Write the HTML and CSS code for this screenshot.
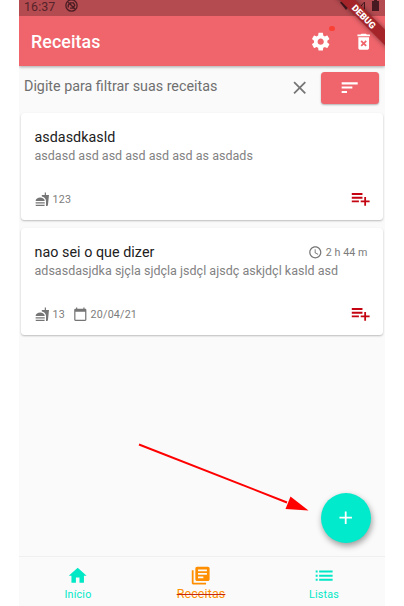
FILE: index.html
```html
<!DOCTYPE html>
<html lang="pt-BR">
<head>
<meta charset="utf-8">
<title>Receitas</title>
<link rel="stylesheet" href="styles.css">
</head>
<body>
<div class="screen">
  <header class="top">
    <div class="status">
      <span class="clock">16:37</span>
      <svg class="sync" viewBox="0 0 12 12"><circle cx="6" cy="6" r="5.2" fill="none" stroke="currentColor" stroke-width="1.2"/><path d="M3 7.8V5.5L5 3.6h2.8L9 5.8 7.4 8.4H4.6M3 3l6.2 6.2" fill="none" stroke="currentColor" stroke-width="1.3"/></svg>
      <svg class="signals" viewBox="0 0 42 14"><path d="M0 2.500Q6-2 12 2.500L6 10z" fill="currentColor"/><path d="M17.500 10.200L24.500 2v8.200z" fill="none" stroke="currentColor"/><path d="M32 1h2V0h3v1h2v10h-7z" fill="currentColor"/></svg>
    </div>
    <div class="appbar">
      <h1 class="title">Receitas</h1>
      <span class="settings"><svg class="icon" viewBox="0 0 24 24"><path d="M19.430 12.980c.04-.32.07-.64.07-.98s-.03-.66-.07-.98l2.110-1.650c.19-.15.24-.42.12-.64l-2-3.460c-.12-.22-.39-.3-.61-.22l-2.490 1c-.52-.4-1.080-.73-1.690-.98l-.38-2.650C14.460 2.180 14.250 2 14 2h-4c-.25 0-.46.18-.49.42l-.38 2.650c-.61.25-1.170.59-1.690.98l-2.490-1c-.23-.09-.49 0-.61.22l-2 3.460c-.13.22-.07.49.12.64l2.110 1.650c-.04.32-.07.65-.07.98s.03.66.07.98l-2.110 1.650c-.19.15-.24.42-.12.64l2 3.460c.12.22.39.3.61.22l2.490-1c.52.4 1.080.73 1.690.98l.38 2.650c.03.24.24.42.49.42h4c.25 0 .46-.18.49-.42l.38-2.650c.61-.25 1.170-.59 1.690-.98l2.490 1c.23.09.49 0 .61-.22l2-3.460c.12-.22.07-.49-.12-.64l-2.110-1.650zM12 15.500c-1.930 0-3.500-1.570-3.500-3.500s1.570-3.500 3.500-3.500 3.500 1.570 3.500 3.500-1.570 3.500-3.500 3.500z"/></svg><i class="dot"></i></span>
      <svg class="icon" viewBox="0 0 24 24"><path d="M6 19c0 1.100.9 2 2 2h8c1.100 0 2-.9 2-2V7H6v12zm2.460-7.120l1.410-1.410L12 12.590l2.120-2.120 1.410 1.410L13.410 14l2.120 2.120-1.410 1.410L12 15.410l-2.120 2.120-1.410-1.410L10.590 14l-2.130-2.120zM15.500 4l-1-1h-5l-1 1H5v2h14V4z"/></svg>
    </div>
    <div class="ribbon">DEBUG</div>
  </header>
  <div class="filter">
    <span class="hint">Digite para filtrar suas receitas</span>
    <svg class="icon clear" viewBox="0 0 24 24"><path d="M19 6.410L17.590 5 12 10.590 6.410 5 5 6.410 10.590 12 5 17.590 6.410 19 12 13.410 17.590 19 19 17.590 13.410 12z"/></svg>
    <button class="sort"><svg class="icon" viewBox="0 0 24 24"><path d="M3 18h6v-2.300H3v2.300zM3 6v2.300h18V6H3zm0 7h12v-2.300H3v2.300z"/></svg></button>
  </div>
  <main class="list">
    <article class="card">
      <div class="head"><h2 class="name">asdasdkasld</h2></div>
      <p class="desc">asdasd asd asd asd asd asd as asdads</p>
      <div class="foot">
        <svg class="small" viewBox="0 0 24 24"><path d="M18.060 22.990h1.660c.84 0 1.530-.64 1.630-1.460L23 5.050h-5V1h-1.970v4.050h-4.970l.3 2.340c1.710.47 3.310 1.320 4.270 2.260 1.440 1.420 2.430 2.890 2.430 5.290v8.050zM1 21.990V21h15.030v.99c0 .55-.45 1-1.010 1H2.010c-.56 0-1.010-.45-1.010-1zm15.030-7c0-8-15.030-8-15.030 0h15.030zM1.020 17h15v2h-15z"/></svg>
        <span class="meta">123</span>
        <svg class="icon add" viewBox="0 0 24 24"><path d="M14 9.800H2v2.200h12v-2.200zm0-4.100H2v2.200h12V5.700zm4 8.300v-4h-2v4h-4v2h4v4h2v-4h4v-2h-4zM2 16.100h8v-2.200H2v2.200z"/></svg>
      </div>
    </article>
    <article class="card">
      <div class="head"><h2 class="name">nao sei o que dizer</h2>
        <svg class="small" viewBox="0 0 24 24"><path d="M11.990 2C6.470 2 2 6.480 2 12s4.470 10 9.990 10C17.520 22 22 17.520 22 12S17.520 2 11.990 2zM12 20c-4.420 0-8-3.580-8-8s3.580-8 8-8 8 3.580 8 8-3.580 8-8 8zm.5-13H11v6l5.250 3.150.75-1.230-4.500-2.670z"/></svg>
        <span class="meta time">2 h 44 m</span></div>
      <p class="desc">adsasdasjdka sjçla sjdçla jsdçl ajsdç askjdçl kasld asd</p>
      <div class="foot">
        <svg class="small" viewBox="0 0 24 24"><path d="M18.060 22.990h1.660c.84 0 1.530-.64 1.630-1.460L23 5.050h-5V1h-1.970v4.050h-4.970l.3 2.340c1.710.47 3.310 1.320 4.270 2.260 1.440 1.420 2.430 2.890 2.430 5.290v8.050zM1 21.990V21h15.030v.99c0 .55-.45 1-1.010 1H2.010c-.56 0-1.010-.45-1.010-1zm15.030-7c0-8-15.030-8-15.030 0h15.030zM1.020 17h15v2h-15z"/></svg>
        <span class="meta">13</span>
        <svg class="small date" viewBox="0 0 24 24"><path d="M20 3h-1V1h-2v2H7V1H5v2H4c-1.100 0-2 .9-2 2v16c0 1.100.9 2 2 2h16c1.100 0 2-.9 2-2V5c0-1.100-.9-2-2-2zm0 18H4V8h16v13z"/></svg>
        <span class="meta">20/04/21</span>
        <svg class="icon add" viewBox="0 0 24 24"><path d="M14 9.800H2v2.200h12v-2.200zm0-4.100H2v2.200h12V5.700zm4 8.300v-4h-2v4h-4v2h4v4h2v-4h4v-2h-4zM2 16.100h8v-2.200H2v2.200z"/></svg>
      </div>
    </article>
  </main>
  <nav class="nav">
    <a class="tab"><svg class="icon" viewBox="0 0 24 24"><path d="M10 20v-6h4v6h5v-8h3L12 3 2 12h3v8z"/></svg><span class="label">Início</span></a>
    <a class="tab active"><svg class="icon" viewBox="0 0 24 24"><path d="M4 6H2v14c0 1.100.9 2 2 2h14v-2H4V6zm16-4H8c-1.100 0-2 .9-2 2v12c0 1.100.9 2 2 2h12c1.100 0 2-.9 2-2V4c0-1.100-.9-2-2-2zm-1 9H9V9h10v2zm-4 4H9v-2h6v2zm4-8H9V5h10v2z"/></svg><span class="label">Receitas</span></a>
    <a class="tab"><svg class="icon" viewBox="0 0 24 24"><path d="M3 15.500h2.200v2.200H3zM3 10.900h2.200v2.200H3zM3 6.300h2.200v2.200H3zM6.900 6.300h15.100v2.200H6.900zM6.900 10.900h15.100v2.200H6.900zM6.900 15.500h15.100v2.200H6.900z"/></svg><span class="label">Listas</span></a>
  </nav>
  <button class="fab"><svg class="icon" viewBox="0 0 24 24"><path d="M19 13h-6v6h-2v-6H5v-2h6V5h2v6h6v2z"/></svg></button>
  <svg class="arrow" viewBox="0 0 174 70"><path d="M1 2.500L149 60.500" stroke="#f00" stroke-width="1.900"/><path d="M152.500 54.500L170.500 68.500L147.500 67z" fill="#f00"/></svg>
</div>
</body>
</html>
```
FILE: styles.css
```css
* { box-sizing: border-box; }
body { margin: 0; background: #fff; font-family: Roboto, "Liberation Sans", sans-serif; }
h1, h2, p { margin: 0; font-weight: 400; }
button { border: 0; padding: 0; display: flex; align-items: center; justify-content: center; color: #fff; }
svg { display: block; flex: none; fill: currentColor; }
.icon { width: 21.4px; height: 21.4px; }
.small { width: 14.6px; height: 14.6px; color: #757575; }

.screen { position: relative; width: 366px; height: 606px; margin-left: 19px; background: #fafafa; overflow: hidden; display: flex; flex-direction: column; }

.top { position: relative; height: 66px; flex: none; background: #f0656c; color: #fff; box-shadow: 0 1px 3px rgba(0,0,0,.35); }
.status { height: 16px; background: #b44b50; color: #55232a; display: flex; align-items: flex-start; padding-left: 5px; }
.clock { font-size: 12.4px; line-height: 13px; height: 14px; letter-spacing: .1px; width: 41px; }
.sync { width: 13px; height: 13px; margin-top: -1px; color: #4b1d23; }
.signals { width: 42px; height: 14px; margin-left: auto; margin-right: 3px; color: #471a21; }
.appbar { height: 50px; display: flex; align-items: center; padding: 1px 10.7px 0 12px; gap: 21.6px; }
.title { font-size: 17.8px; font-weight: 500; letter-spacing: .1px; margin-right: auto; }
.settings { position: relative; }
.dot { position: absolute; left: 19.5px; top: -5.2px; width: 5.5px; height: 5.5px; border-radius: 50%; background: #fa4035; }
.ribbon { position: absolute; left: 284.7px; top: 11.3px; width: 120px; height: 11px; line-height: 11.5px; transform: rotate(45deg); background: #a52429; box-shadow: 0 0 5px rgba(0,0,0,.5); font-size: 9.2px; font-weight: 900; text-align: center; }

.filter { height: 43px; flex: none; display: flex; align-items: center; padding: 0 6.5px 0 5px; }
.hint { font-size: 14.3px; color: #6f6f6f; margin-right: auto; padding-bottom: 4px; }
.clear { color: #757575; margin-right: 11px; }
.sort { width: 57.5px; height: 32px; border-radius: 3.5px; background: #f0656c; box-shadow: 0 1px 2px rgba(0,0,0,.3); }

.list { flex: 1; padding: 4px 2.5px 0 1.5px; display: flex; flex-direction: column; gap: 8px; }
.card { height: 107px; flex: none; background: #fff; border-radius: 3.5px; box-shadow: 0 1px 2px rgba(0,0,0,.25); padding: 14.5px 11.5px 0 14px; display: flex; flex-direction: column; }
.head { display: flex; align-items: center; height: 19.5px; padding-right: 3.5px; }
.name { font-size: 14.3px; color: #212121; letter-spacing: .04px; margin-right: auto; }
.meta { font-size: 10.7px; letter-spacing: .2px; color: #7c7c7c; margin-left: 3.5px; }
.time { letter-spacing: .05px; }
.desc { font-size: 12.5px; line-height: 17px; letter-spacing: .02px; color: #828282; white-space: nowrap; }
.foot { display: flex; align-items: center; height: 22px; margin-top: 24px; }
.date { margin-left: 7.5px; }
.add { margin-left: auto; color: #c40511; }

.nav { height: 50px; flex: none; border-top: 1px solid #efefef; display: grid; grid-template-columns: 118px 128px 118px; }
.tab { display: flex; flex-direction: column; align-items: center; padding-top: 7.5px; color: #00e8c6; }
.label { font-size: 10.7px; line-height: 13px; letter-spacing: .2px; margin-top: 2px; }
.active { color: #ff8f00; }
.active .label { font-size: 12.5px; letter-spacing: .1px; text-decoration: line-through #c62810 1px; margin-top: 1px; }

.fab { position: absolute; left: 302px; top: 492.5px; width: 50px; height: 50px; border-radius: 50%; background: #00eacb; box-shadow: 1px 3px 6px rgba(0,0,0,.38); }
.arrow { position: absolute; left: 119px; top: 442px; width: 174px; height: 70px; }
```
